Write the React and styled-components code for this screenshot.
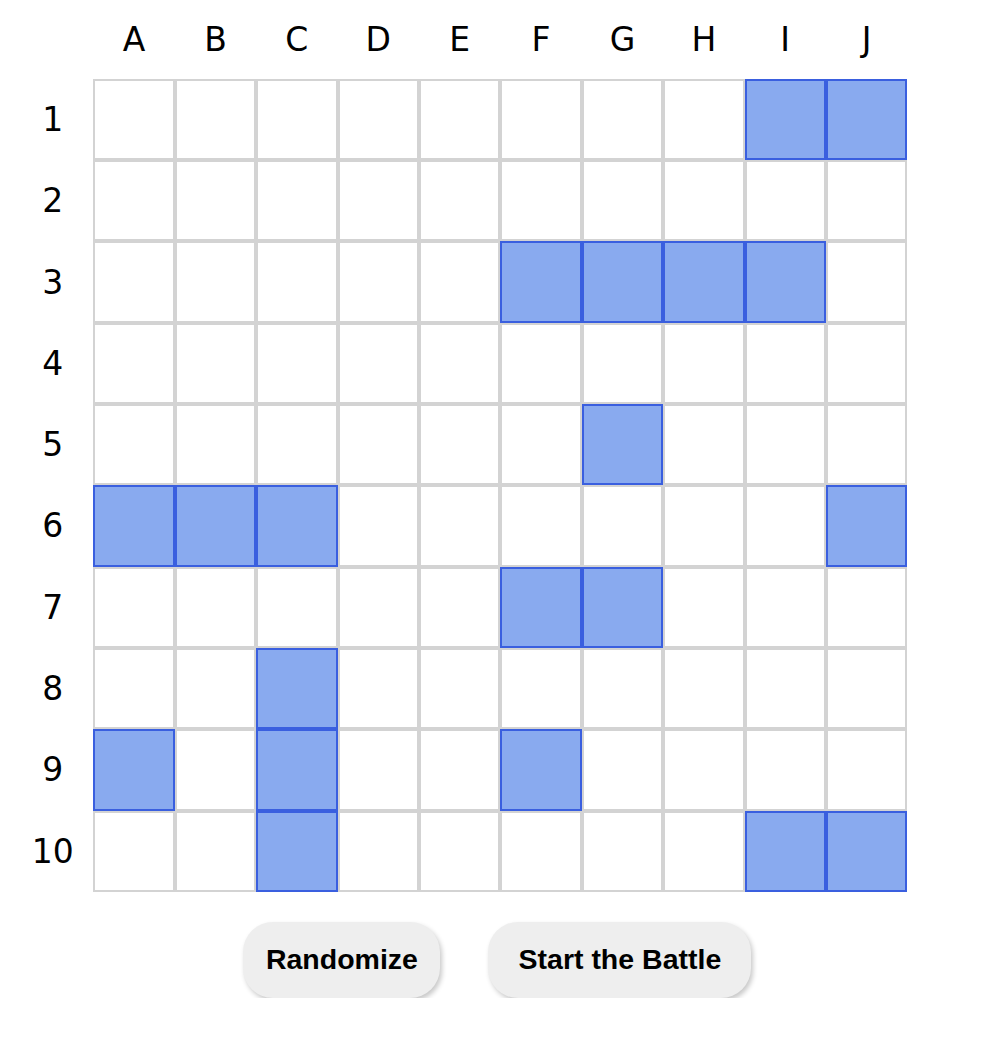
import React, { useState } from "react";
import styled, { createGlobalStyle } from "styled-components";

const CELL = 81.4;
const COLS = ["A", "B", "C", "D", "E", "F", "G", "H", "I", "J"];

const GlobalStyle = createGlobalStyle`
  body {
    margin: 0;
    background: #fff;
    font-family: "DejaVu Sans", Verdana, sans-serif;
  }
`;

const Page = styled.div`
  padding-left: 12px;
`;

const Board = styled.div`
  display: grid;
  grid-template-columns: repeat(11, ${CELL}px);
  grid-template-rows: 78.7px repeat(10, 81.33px);
`;

const Label = styled.div`
  display: flex;
  align-items: center;
  justify-content: center;
  font-size: 33px;
  color: #000;
`;

const Cell = styled.div`
  box-sizing: border-box;
  border: 2px solid ${(p) => (p.ship ? "#3a5fdf" : "#d3d3d3")};
  background: ${(p) => (p.ship ? "#89aaef" : "#fff")};
`;

const ButtonRow = styled.div`
  margin-left: ${CELL - 3}px;
  width: ${CELL * 10}px;
  display: flex;
  justify-content: center;
  gap: 48px;
  margin-top: 30px;
`;

const Button = styled.button`
  box-sizing: border-box;
  width: ${(p) => p.w}px;
  height: 76px;
  border: none;
  border-radius: 30px;
  background: #eeeeee;
  box-shadow: 2px 3px 5px rgba(0, 0, 0, 0.22);
  font-family: "Liberation Sans", Arial, sans-serif;
  font-weight: bold;
  font-size: 28.5px;
  color: #000;
  cursor: pointer;
`;

// ships as "row:col" keys
const initialShips = [
  "1:I", "1:J",
  "3:F", "3:G", "3:H", "3:I",
  "5:G",
  "6:A", "6:B", "6:C", "6:J",
  "7:F", "7:G",
  "8:C",
  "9:A", "9:C", "9:F",
  "10:C", "10:I", "10:J",
];

const App = () => {
  const [ships] = useState(new Set(initialShips));

  const rows = [];
  for (let r = 1; r <= 10; r++) {
    rows.push(<Label key={"r" + r}>{r}</Label>);
    COLS.forEach((c) => {
      rows.push(<Cell key={r + c} ship={ships.has(r + ":" + c)} />);
    });
  }

  return (
    <Page>
      <GlobalStyle />
      <Board>
        <div />
        {COLS.map((c) => (
          <Label key={c}>{c}</Label>
        ))}
        {rows}
      </Board>
      <ButtonRow>
        <Button w={197}>Randomize</Button>
        <Button w={263}>Start the Battle</Button>
      </ButtonRow>
    </Page>
  );
};

export default App;
